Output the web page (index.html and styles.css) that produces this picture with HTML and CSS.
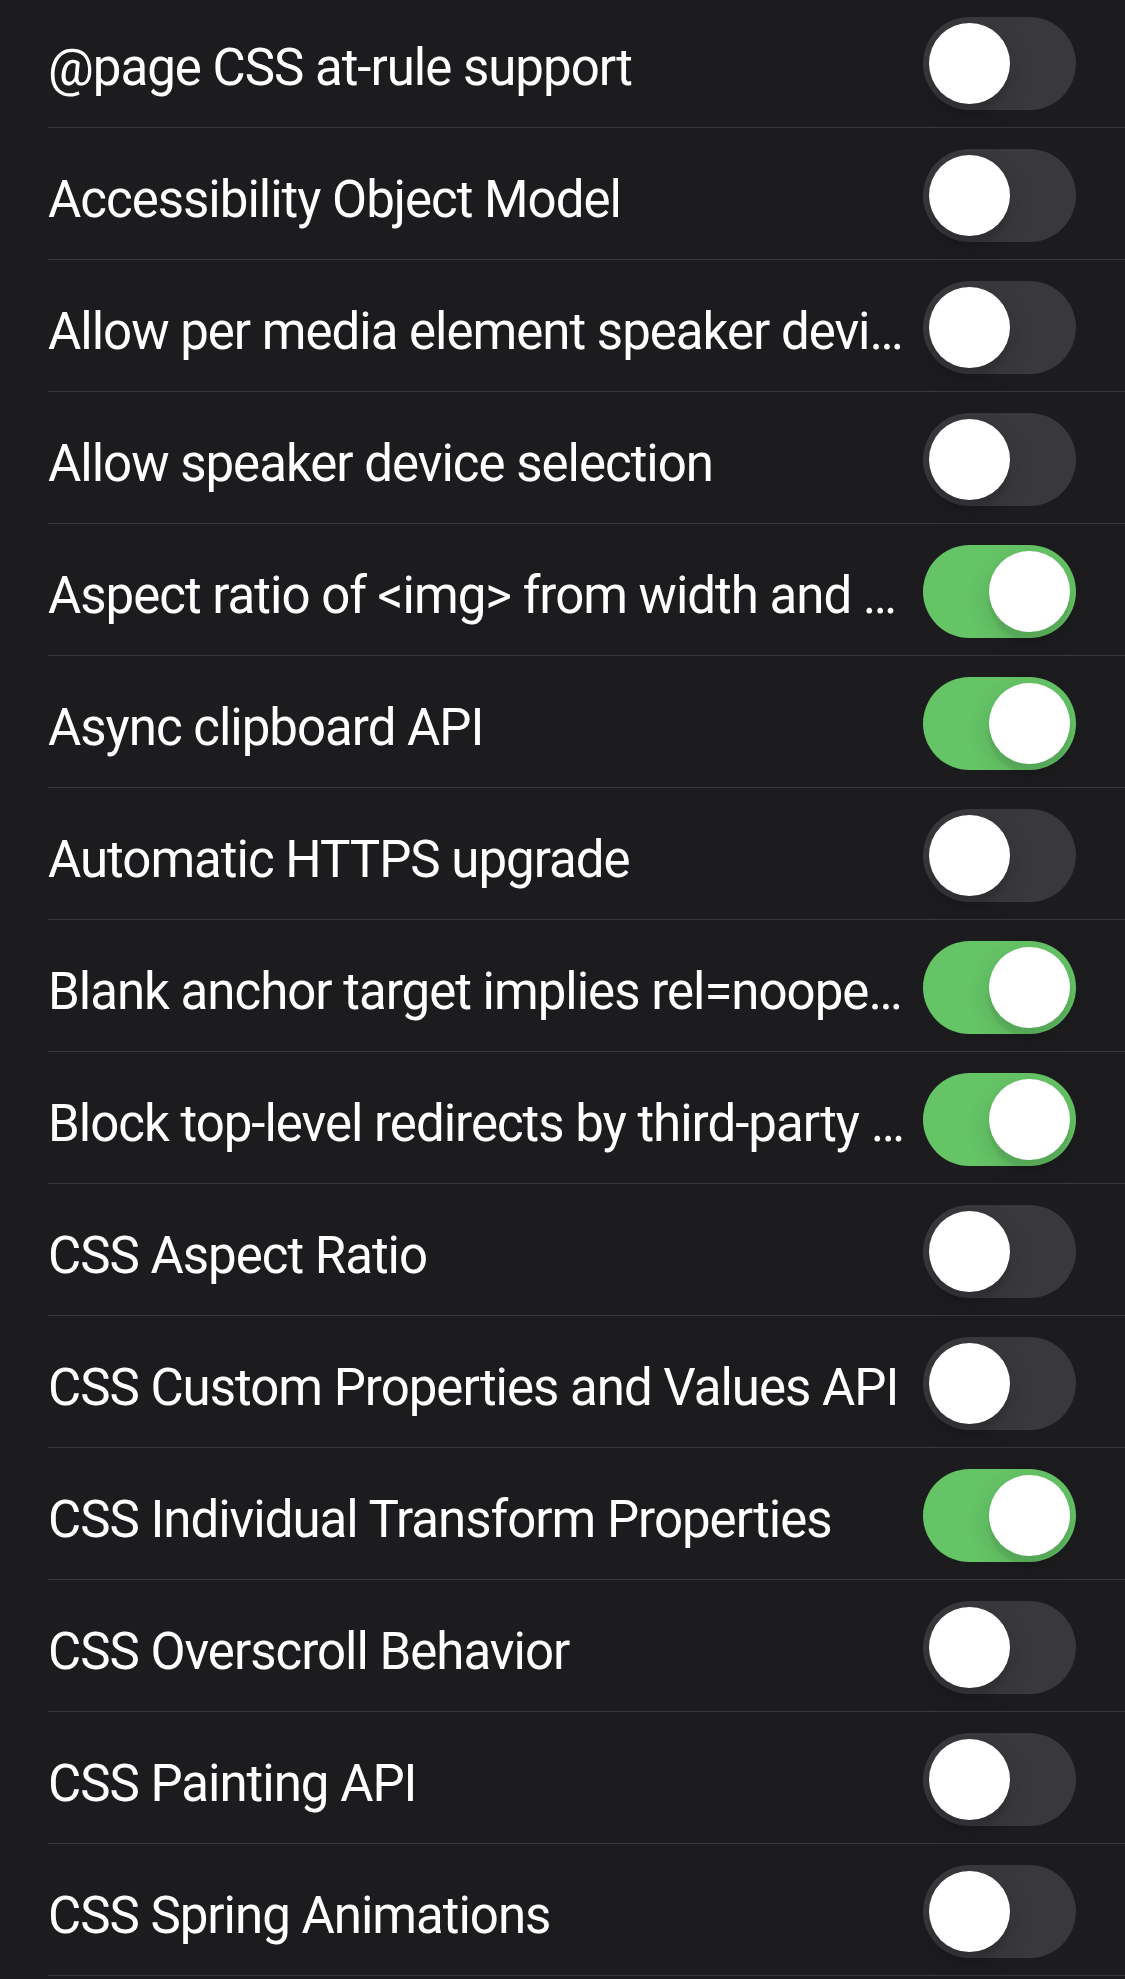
FILE: index.html
```html
<!DOCTYPE html>
<html>
<head>
    <meta charset="UTF-8">
    <meta name="viewport" content="width=device-width, initial-scale=1.0">
    <title>Experimental Features</title>
    <link rel="stylesheet" href="styles.css">
</head>
<body>
    <ul class="list">
        <li class="row"><div class="row-inner"><span class="label">@page CSS at-rule support</span><span class="switch"><span class="knob"></span></span></div></li>
        <li class="row"><div class="row-inner"><span class="label">Accessibility Object Model</span><span class="switch"><span class="knob"></span></span></div></li>
        <li class="row"><div class="row-inner"><span class="label">Allow per media element speaker device selection</span><span class="switch"><span class="knob"></span></span></div></li>
        <li class="row"><div class="row-inner"><span class="label">Allow speaker device selection</span><span class="switch"><span class="knob"></span></span></div></li>
        <li class="row"><div class="row-inner"><span class="label">Aspect ratio of &lt;img&gt; from width and height</span><span class="switch on"><span class="knob"></span></span></div></li>
        <li class="row"><div class="row-inner"><span class="label">Async clipboard API</span><span class="switch on"><span class="knob"></span></span></div></li>
        <li class="row"><div class="row-inner"><span class="label">Automatic HTTPS upgrade</span><span class="switch"><span class="knob"></span></span></div></li>
        <li class="row"><div class="row-inner"><span class="label">Blank anchor target implies rel=noopener</span><span class="switch on"><span class="knob"></span></span></div></li>
        <li class="row"><div class="row-inner"><span class="label">Block top-level redirects by third-party iframes</span><span class="switch on"><span class="knob"></span></span></div></li>
        <li class="row"><div class="row-inner"><span class="label">CSS Aspect Ratio</span><span class="switch"><span class="knob"></span></span></div></li>
        <li class="row"><div class="row-inner"><span class="label">CSS Custom Properties and Values API</span><span class="switch"><span class="knob"></span></span></div></li>
        <li class="row"><div class="row-inner"><span class="label">CSS Individual Transform Properties</span><span class="switch on"><span class="knob"></span></span></div></li>
        <li class="row"><div class="row-inner"><span class="label">CSS Overscroll Behavior</span><span class="switch"><span class="knob"></span></span></div></li>
        <li class="row"><div class="row-inner"><span class="label">CSS Painting API</span><span class="switch"><span class="knob"></span></span></div></li>
        <li class="row"><div class="row-inner"><span class="label">CSS Spring Animations</span><span class="switch"><span class="knob"></span></span></div></li>
    </ul>
</body>
</html>
```

FILE: styles.css
```css
:root {
    --bg: #1c1c1e;
    --separator: #38383a;
    --track-off: #39393d;
    --track-on: #65c466;
    --text: #ffffff;
}
html, body {
    margin: 0;
    padding: 0;
    background-color: var(--bg);
    overflow: hidden;
}
body {
    font-family: Roboto, 'Noto Sans', sans-serif;
    color: var(--text);
}
.list {
    list-style: none;
    margin: -4px 0 0 0;
    padding: 0;
}
.row {
    padding-left: 48px;
}
.row-inner {
    display: flex;
    align-items: center;
    height: 131px;
    padding-right: 49px;
    border-bottom: 1px solid var(--separator);
}
.label {
    flex: 1;
    min-width: 0;
    margin-right: 14px;
    font-size: 51px;
    letter-spacing: -1px;
    white-space: nowrap;
    overflow: hidden;
    text-overflow: ellipsis;
    padding-top: 11px;
}
.switch {
    flex: none;
    position: relative;
    width: 153px;
    height: 93px;
    border-radius: 47px;
    background-color: var(--track-off);
    margin-top: 3px;
}
.switch.on {
    background-color: var(--track-on);
}
.knob {
    position: absolute;
    top: 6px;
    left: 6px;
    width: 81px;
    height: 81px;
    border-radius: 50%;
    background-color: #ffffff;
    box-shadow: 0 9px 24px rgba(0, 0, 0, 0.15), 0 9px 3px rgba(0, 0, 0, 0.06);
}
.switch.on .knob {
    left: 66px;
}
```
